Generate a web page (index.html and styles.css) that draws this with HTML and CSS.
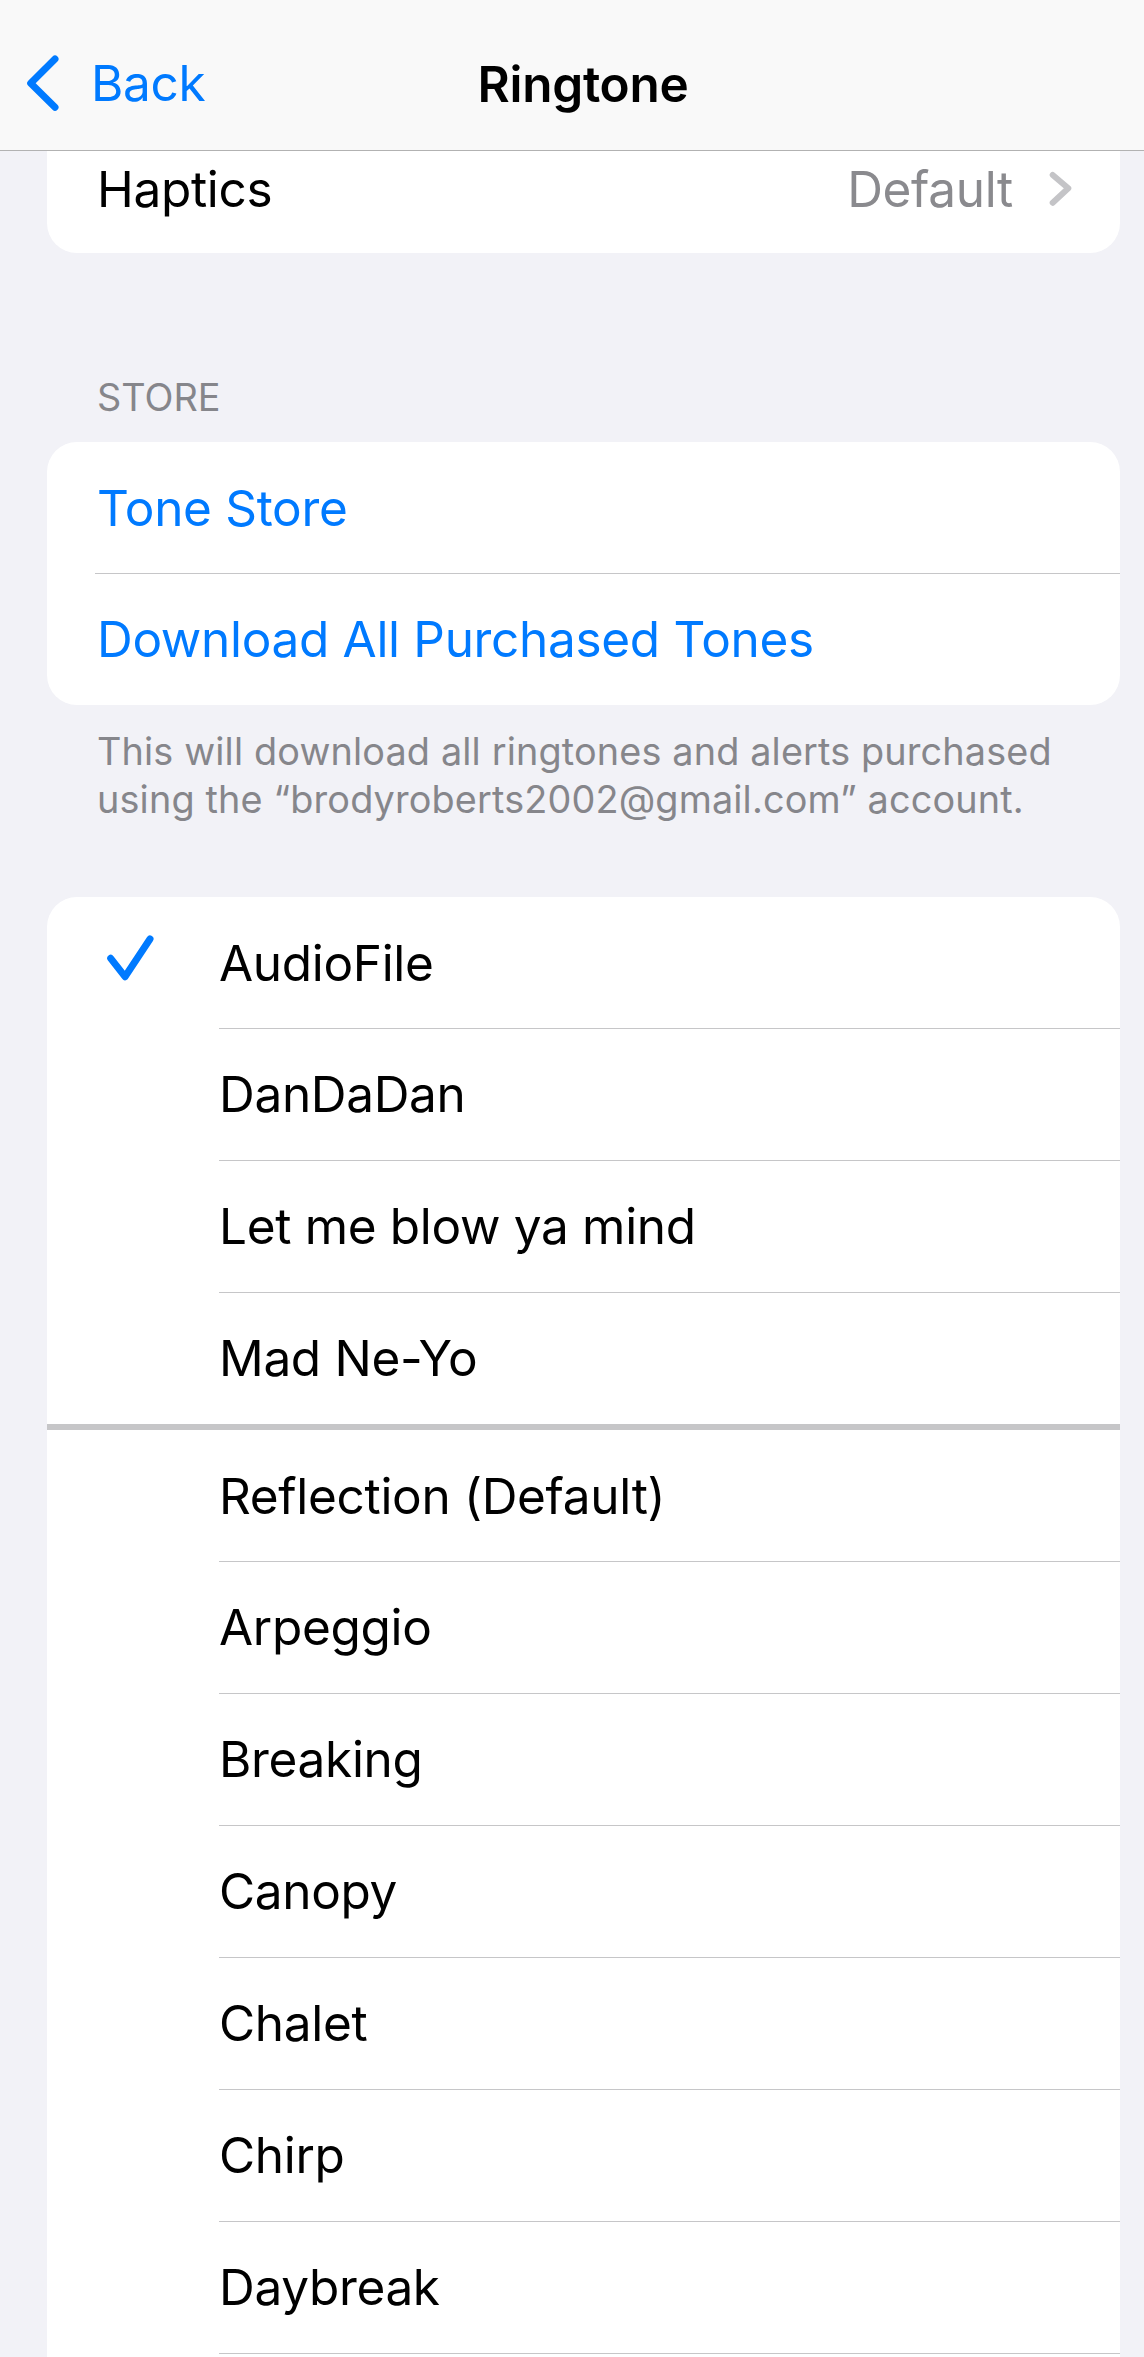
FILE: index.html
```html
<!DOCTYPE html>
<html lang="en">
<head>
<meta charset="utf-8">
<title>Ringtone</title>
<link rel="stylesheet" href="styles.css">
</head>
<body>
<header class="navbar">
  <a class="back">
    <svg class="back-chevron" width="40" height="64" viewBox="0 0 40 64"><polyline points="29,8 4.7,32.3 29,56.3" fill="none" stroke="#007aff" stroke-width="7" stroke-linecap="round" stroke-linejoin="round"/></svg>
    <span class="back-label">Back</span>
  </a>
  <h1 class="title">Ringtone</h1>
</header>

<main class="content">
  <section class="group">
    <div class="card">
      <div class="row haptics">
        <span class="label">Haptics</span>
        <span class="value">Default</span>
        <svg class="disclosure" width="24" height="36" viewBox="0 0 24 36"><polyline points="4.7,4 20.3,17.3 4.7,31.7" fill="none" stroke="#c4c4c7" stroke-width="6" stroke-linecap="round" stroke-linejoin="round"/></svg>
      </div>
    </div>
  </section>

  <section class="group">
    <h2 class="group-header">STORE</h2>
    <div class="card">
      <div class="row link">Tone Store</div>
      <div class="row link">Download All Purchased Tones</div>
    </div>
    <p class="group-footer">This will download all ringtones and alerts purchased using the “brodyroberts2002@gmail.com” account.</p>
  </section>

  <section class="group">
    <div class="card tones">
      <div class="tone selected">
        <svg class="check" width="52" height="50" viewBox="0 0 52 50"><polyline points="4.7,23.3 19,41.7 44,4" fill="none" stroke="#007aff" stroke-width="7" stroke-linecap="round" stroke-linejoin="round"/></svg>
        <span class="tone-name">AudioFile</span>
      </div>
      <div class="tone"><span class="tone-name">DanDaDan</span></div>
      <div class="tone"><span class="tone-name">Let me blow ya mind</span></div>
      <div class="tone last-custom"><span class="tone-name">Mad Ne-Yo</span></div>
      <div class="tone"><span class="tone-name">Reflection (Default)</span></div>
      <div class="tone"><span class="tone-name">Arpeggio</span></div>
      <div class="tone"><span class="tone-name">Breaking</span></div>
      <div class="tone"><span class="tone-name">Canopy</span></div>
      <div class="tone"><span class="tone-name">Chalet</span></div>
      <div class="tone"><span class="tone-name">Chirp</span></div>
      <div class="tone"><span class="tone-name">Daybreak</span></div>
      <div class="tone tone-end"></div>
    </div>
  </section>
</main>
</body>
</html>
```
FILE: styles.css
```css
* { box-sizing: border-box; }
html, body { margin: 0; padding: 0; }
body {
  background: #f2f2f7;
  font-family: Inter, "Noto Sans", sans-serif;
  color: #000;
  width: 1144px;
  letter-spacing: -0.02em;
}
.navbar {
  position: fixed;
  top: 0; left: 0; right: 0;
  height: 151px;
  padding-top: 18px;
  background: #f9f9f9;
  border-bottom: 1px solid #b2b2b2;
  display: flex;
  align-items: center;
  justify-content: center;
  z-index: 10;
}
.back {
  position: absolute;
  left: 26px;
  top: 51px;
  display: flex;
  align-items: center;
  color: #007aff;
  font-size: 49.5px;
}
.back-chevron { display: block; }
.back-label { margin-left: 25px; }
.title {
  margin: 0;
  font-size: 49.5px;
  font-weight: 600;
  letter-spacing: -0.3px;
  padding-left: 22px;
}
.content { padding-top: 121px; padding-right: 24px; padding-left: 47px; }
.group { margin: 0; }
.card {
  background: #fff;
  border-radius: 30px;
  overflow: hidden;
}
.row {
  height: 132px;
  display: flex;
  align-items: center;
  padding: 0 0 0 50px;
  font-size: 49.5px;
  position: relative;
}
.row.haptics { padding-top: 3px; }
.row .label { flex: 1; }
.row .value { color: #8a8a8e; }
.disclosure { margin: 0 48px 0 35px; }
.row.link { color: #007aff; height: 131px; }
.row.link + .row.link { height: 132px; }
.row.link + .row.link::before {
  content: "";
  position: absolute;
  top: 0; left: 48px; right: 0;
  height: 1px;
  background: #c6c6c8;
}
.group-header {
  margin: 120px 0 21px 50px;
  font-size: 37.8px;
  font-weight: 400;
  line-height: 48px;
  letter-spacing: 0;
  color: #86868b;
}
.group-footer {
  margin: 22px 0 74px 50px;
  font-size: 37.8px;
  line-height: 48px;
  letter-spacing: 0.15px;
  color: #86868b;
}
.tone {
  height: 131px;
  display: flex;
  align-items: center;
  position: relative;
  font-size: 49.5px;
}
.tone + .tone { height: 132px; }
.tone + .tone::before {
  content: "";
  position: absolute;
  top: 0; left: 172px; right: 0;
  height: 1px;
  background: #c6c6c8;
}
.tone.last-custom + .tone::before { left: 0; height: 6px; }
.tone.last-custom + .tone { height: 137px; padding-top: 6px; }
.tone.tone-end { height: 40px; }
.tone-name { margin-left: 172px; }
.check { position: absolute; left: 59px; top: 38px; }
```
